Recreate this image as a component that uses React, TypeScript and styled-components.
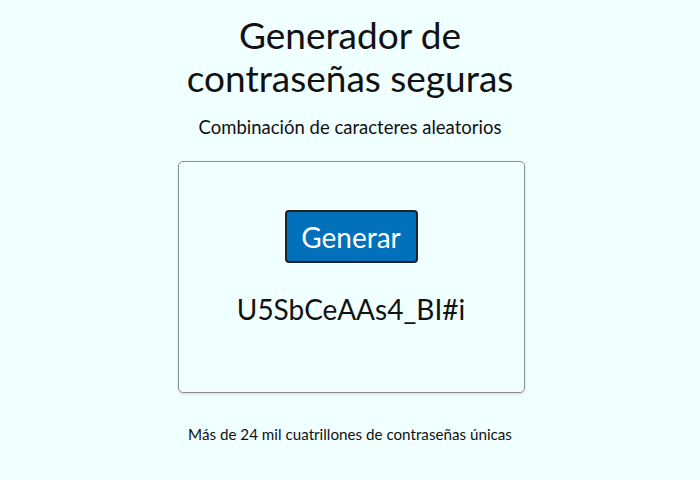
import React from "react";
import styled, { createGlobalStyle } from "styled-components";

const Global = createGlobalStyle`
  html, body { margin: 0; padding: 0; background: #f0ffff; }
  body { font-family: Lato, "Noto Sans", sans-serif; color: #111; }
`;

const Page = styled.main`
  display: flex;
  flex-direction: column;
  align-items: center;
  padding-top: 13px;
`;

const Title = styled.h1`
  margin: 0;
  font-size: 37px;
  font-weight: 400;
  line-height: 43px;
  text-align: center;
  width: 360px;
`;

const Subtitle = styled.p`
  margin: 17px 0 0;
  font-size: 18.5px;
  line-height: 22px;
`;

const Card = styled.section`
  box-sizing: border-box;
  width: 347px;
  height: 232px;
  margin: 23px 0 0 2px;
  border: 1px solid #8f9090;
  border-radius: 5px;
  box-shadow: 0 1px 3px rgba(0, 0, 0, 0.15);
  display: flex;
  flex-direction: column;
  align-items: center;
  padding-top: 48px;
`;

const Button = styled.button`
  box-sizing: border-box;
  width: 133px;
  height: 53px;
  background: #0070ba;
  color: #fff;
  border: 2px solid #222;
  border-radius: 4px;
  font-family: Lato, "Noto Sans", sans-serif;
  font-size: 28px;
  padding: 0;
  cursor: pointer;
`;

const Password = styled.div`
  margin-top: 29px;
  font-size: 28px;
  line-height: 34px;
`;

const Footer = styled.p`
  margin: 31px 0 0;
  font-size: 15.2px;
  line-height: 20px;
`;

export default function App() {
  return (
    <>
      <Global />
      <Page>
        <Title>Generador de contraseñas seguras</Title>
        <Subtitle>Combinación de caracteres aleatorios</Subtitle>
        <Card>
          <Button>Generar</Button>
          <Password>U5SbCeAAs4_BI#i</Password>
        </Card>
        <Footer>Más de 24 mil cuatrillones de contraseñas únicas</Footer>
      </Page>
    </>
  );
}
